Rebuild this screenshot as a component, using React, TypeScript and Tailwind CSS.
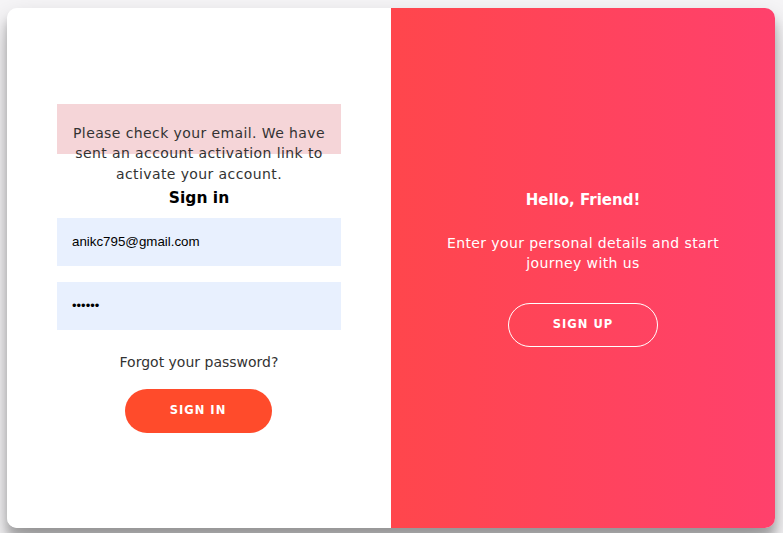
import React from "react";

const font = { fontFamily: "'DejaVu Sans', sans-serif" };

function SignInPanel() {
  return (
    <div className="w-1/2 h-full bg-white flex flex-col items-center justify-center px-[50px] text-center" style={font}>
      {/* activation notice – text spills past the pink box like the original */}
      <div className="w-full h-[50px] bg-[#f5d5d8] pt-[19px] px-2 text-[14px] leading-[20.5px] text-[#333] tracking-[0.4px]">
        Please check your email. We have sent an account activation link to activate your account.
      </div>
      <h1 className="mt-[34px] text-[15.5px] leading-5 font-bold text-black">Sign in</h1>
      <input
        readOnly
        value="anikc795@gmail.com"
        className="mt-[10px] w-full h-[48px] bg-[#e8f0fe] px-[15px] text-[13.33px] text-black outline-none"
        style={{ fontFamily: "'Liberation Sans', Arial, sans-serif" }}
      />
      <input
        readOnly
        type="password"
        value="123456"
        className="mt-4 w-full h-[48px] bg-[#e8f0fe] px-[15px] text-[13px] text-black outline-none"
        style={{ fontFamily: "'Liberation Sans', Arial, sans-serif" }}
      />
      <a className="mt-[22px] text-[14px] leading-5 text-[#333]">Forgot your password?</a>
      <button className="mt-[17px] -ml-[2px] w-[147px] h-[44px] rounded-full bg-[#ff4b2b] text-white text-[11.5px] font-bold tracking-[1px] uppercase">
        Sign In
      </button>
    </div>
  );
}

function OverlayPanel() {
  return (
    <div
      className="w-1/2 h-full flex flex-col items-center justify-center px-10 text-center text-white bg-[linear-gradient(to_right,#ff464c,#ff416c)]"
      style={font}
    >
      <h1 className="text-[15px] leading-5 font-bold">Hello, Friend!</h1>
      <p className="mt-[23px] text-[14px] leading-5 tracking-[0.4px]">
        Enter your personal details and start journey with us
      </p>
      <button className="mt-[30px] w-[150px] h-[44px] rounded-full border border-white text-[11.5px] font-bold tracking-[1px] uppercase">
        Sign Up
      </button>
    </div>
  );
}

export default function App() {
  return (
    <div className="min-h-screen bg-[#f6f5f7] pl-[7px] pt-2">
      <div className="w-[768px] h-[520px] rounded-[10px] overflow-hidden flex shadow-[0_14px_28px_rgba(0,0,0,0.25),0_10px_10px_rgba(0,0,0,0.22)]">
        <SignInPanel />
        <OverlayPanel />
      </div>
    </div>
  );
}
